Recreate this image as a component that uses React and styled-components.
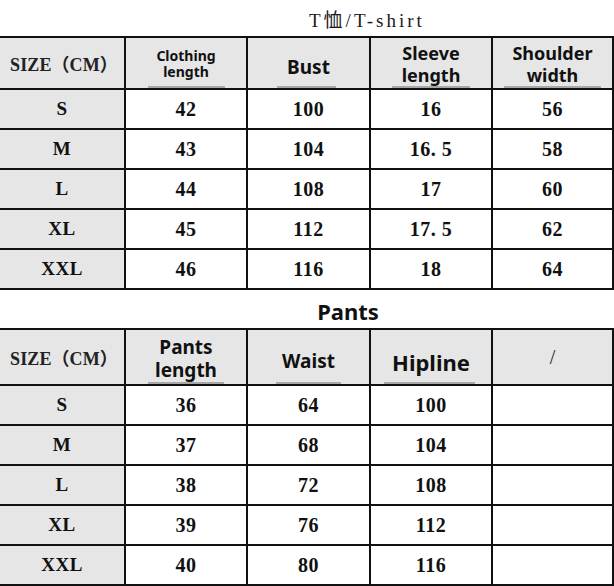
import React from "react";
import styled, { createGlobalStyle } from "styled-components";

const GlobalStyle = createGlobalStyle`
  html, body {
    margin: 0;
    padding: 0;
    background: #ffffff;
  }
  * {
    box-sizing: border-box;
  }
`;

// Data
const shirtRows = [
  ["S", "42", "100", "16", "56"],
  ["M", "43", "104", "16. 5", "58"],
  ["L", "44", "108", "17", "60"],
  ["XL", "45", "112", "17. 5", "62"],
  ["XXL", "46", "116", "18", "64"],
];

const pantsRows = [
  ["S", "36", "64", "100", ""],
  ["M", "37", "68", "104", ""],
  ["L", "38", "72", "108", ""],
  ["XL", "39", "76", "112", ""],
  ["XXL", "40", "80", "116", ""],
];

const Page = styled.div`
  width: 614px;
  height: 586px;
  overflow: hidden;
  display: flex;
  flex-direction: column;
  background: #fff;
  color: #111;
`;

const ShirtTitle = styled.div`
  height: 36px;
  display: flex;
  align-items: center;
  padding: 0 0 0 309px;
  font-family: "Liberation Serif", "Noto Sans CJK SC", serif;
  font-size: 19px;
  letter-spacing: 3px;
  color: #1a1a1a;
`;

const PantsTitle = styled.div`
  height: 38px;
  display: flex;
  align-items: center;
  justify-content: center;
  padding: 4px 0 0 82px;
  font-family: "Noto Sans", "Open Sans", sans-serif;
  font-weight: 700;
  font-size: 22px;
  color: #111;
`;

const Grid = styled.div`
  display: grid;
  grid-template-columns: 126px 122px 123px 122px 121px;
  border-top: 2px solid #111;
`;

const Cell = styled.div`
  height: ${(p) => p.$h}px;
  display: flex;
  align-items: center;
  justify-content: center;
  text-align: center;
  border-right: 2px solid #111;
  border-bottom: 2px solid #111;
  background: ${(p) => (p.$gray ? "#e6e6e6" : "#ffffff")};
  position: relative;
`;

const SizeLabel = styled.span`
  font-family: "Liberation Serif", "Noto Sans CJK SC", serif;
  font-size: 18px;
  font-weight: 700;
  letter-spacing: 0.1px;
  color: #222;
  padding-left: 4px;
`;

const HeadLabel = styled.span`
  display: flex;
  flex-direction: column;
  align-items: center;
  font-family: "Noto Sans", "Open Sans", sans-serif;
  font-weight: 700;
  font-size: ${(p) => p.$size}px;
  line-height: ${(p) => p.$lh || 1.2};
  color: #111;
  padding-top: ${(p) => p.$pt || 0}px;
`;

const Slash = styled.span`
  font-family: "Liberation Serif", serif;
  font-size: 20px;
  color: #222;
`;

// the faint gray strokes that sit under each header word
const Smudge = styled.span`
  position: absolute;
  bottom: 0;
  left: 50%;
  width: ${(p) => p.$w}px;
  margin-left: ${(p) => -p.$w / 2 + (p.$dx || 0)}px;
  height: 2px;
  background: #a8a8a8;
`;

const Value = styled.span`
  font-family: "Liberation Serif", "DejaVu Serif", serif;
  font-weight: 700;
  font-size: 20px;
  color: #111;
  letter-spacing: 0.5px;
  white-space: pre;
`;

const RowLabel = styled(Value)`
  font-size: 19px;
`;

const HeadCell = ({ h, children, smudge, dx }) => (
  <Cell $h={h} $gray>
    {children}
    {smudge ? <Smudge $w={smudge} $dx={dx} /> : null}
  </Cell>
);

const BodyRows = ({ rows }) =>
  rows.map((row) =>
    row.map((v, i) => (
      <Cell key={row[0] + i} $h={40} $gray={i === 0}>
        {i === 0 ? <RowLabel>{v}</RowLabel> : <Value>{v}</Value>}
      </Cell>
    ))
  );

const App = () => {
  return (
    <Page>
      <GlobalStyle />
      <ShirtTitle>T恤/T-shirt</ShirtTitle>
      <Grid>
        <HeadCell h={52}>
          <SizeLabel>SIZE（CM）</SizeLabel>
        </HeadCell>
        <HeadCell h={52} smudge={77}>
          <HeadLabel $size={14} $lh={1.15} $pt={2}>
            <span>Clothing</span>
            <span>length</span>
          </HeadLabel>
        </HeadCell>
        <HeadCell h={52} smudge={59} dx={-2}>
          <HeadLabel $size={19} $pt={8}>
            Bust
          </HeadLabel>
        </HeadCell>
        <HeadCell h={52} smudge={78}>
          <HeadLabel $size={18} $lh={1.2} $pt={4}>
            <span>Sleeve</span>
            <span>length</span>
          </HeadLabel>
        </HeadCell>
        <HeadCell h={52} smudge={97}>
          <HeadLabel $size={18} $lh={1.2} $pt={4}>
            <span>Shoulder</span>
            <span>width</span>
          </HeadLabel>
        </HeadCell>
        <BodyRows rows={shirtRows} />
      </Grid>

      <PantsTitle>Pants</PantsTitle>

      <Grid>
        <HeadCell h={56}>
          <SizeLabel>SIZE（CM）</SizeLabel>
        </HeadCell>
        <HeadCell h={56} smudge={76}>
          <HeadLabel $size={19} $lh={1.2} $pt={4}>
            <span>Pants</span>
            <span>length</span>
          </HeadLabel>
        </HeadCell>
        <HeadCell h={56} smudge={65}>
          <HeadLabel $size={19} $pt={8}>
            Waist
          </HeadLabel>
        </HeadCell>
        <HeadCell h={56} smudge={91} dx={-2}>
          <HeadLabel $size={22} $pt={10}>
            Hipline
          </HeadLabel>
        </HeadCell>
        <HeadCell h={56}>
          <Slash>/</Slash>
        </HeadCell>
        <BodyRows rows={pantsRows} />
      </Grid>
    </Page>
  );
};

export default App;
